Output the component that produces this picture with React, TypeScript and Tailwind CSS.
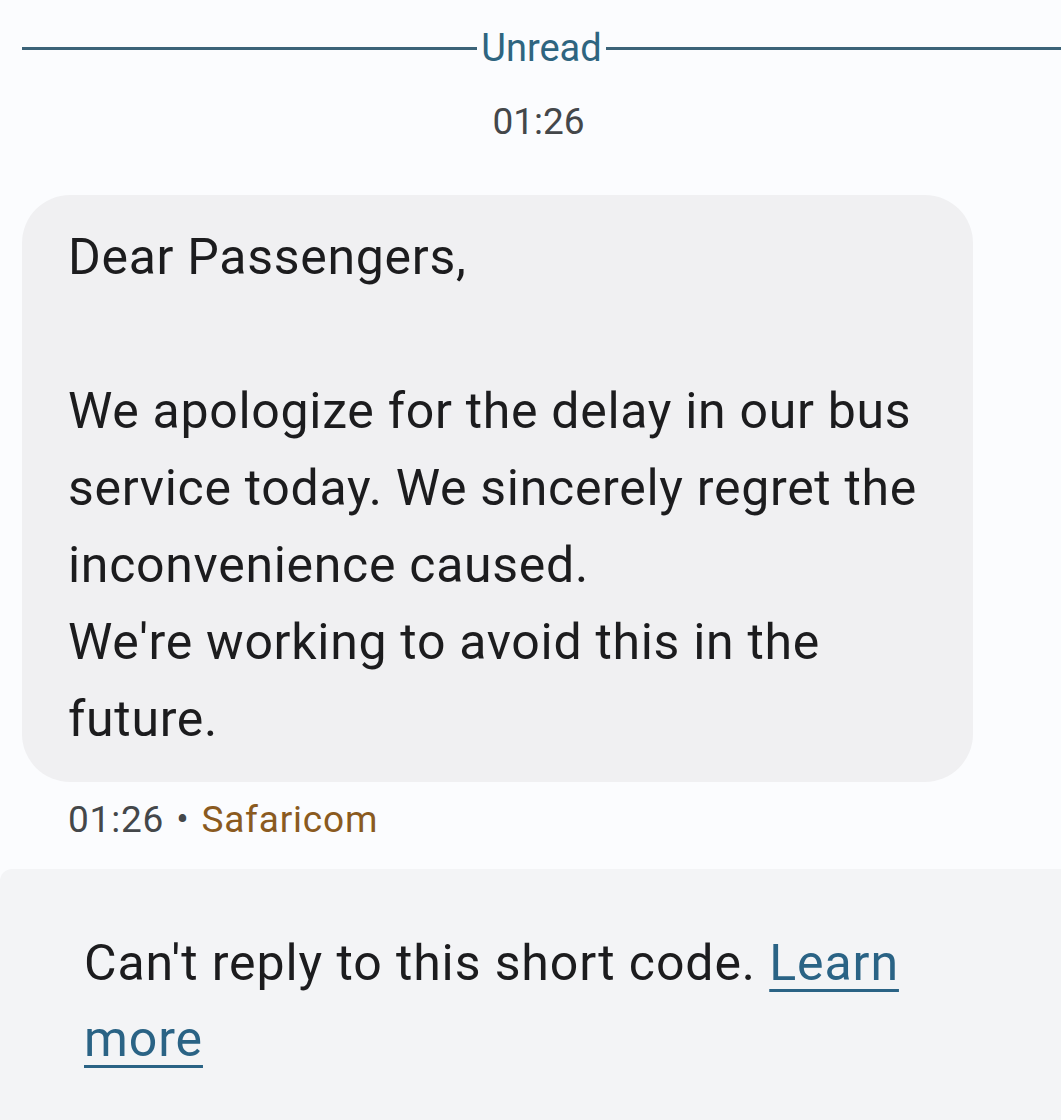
import React from 'react';

const font = { fontFamily: 'Roboto, "Noto Sans", sans-serif' };

export default function App() {
  return (
    <div className="w-[1061px] h-[1120px] bg-[#fbfcfe] flex flex-col overflow-hidden" style={font}>
      <div className="flex items-center pl-[22px] pt-[26px]">
        <div className="flex-1 h-[3px] bg-[#3b6378]" />
        <span className="px-[4px] text-[38px] leading-[44px] text-[#2e6580]">Unread</span>
        <div className="flex-1 h-[3px] bg-[#3b6378]" />
      </div>

      <div className="text-center text-[37px] leading-[44px] text-[#44474a] mt-[30px] pl-[16px]">01:26</div>

      <div className="mt-[51px] ml-[22px] w-[951px] rounded-[48px] bg-[#f0f0f2] pl-[46px] pr-[36px] py-[24px]">
        <p className="text-[50px] leading-[77px] tracking-[0.7px] text-[#1c1c1e] whitespace-pre-line">
          {"Dear Passengers,\n\nWe apologize for the delay in our bus service today. We sincerely regret the inconvenience caused.\nWe're working to avoid this in the future."}
        </p>
      </div>

      <div className="ml-[68px] mt-[16px] text-[37px] leading-[44px] tracking-[0.8px] text-[#44474a]">
        01:26 <span className="mx-[2px]">•</span> <span className="text-[#8a5a20]">Safaricom</span>
      </div>

      <div className="flex-1 mt-[27px] bg-[#f3f4f6] rounded-tl-[12px] pl-[84px] pr-[130px] pt-[56px]">
        <p className="text-[50px] leading-[76px] tracking-[0.9px] text-[#1c1c1e]">
          Can't reply to this short code.{' '}
          <a className="text-[#2a6385] underline decoration-[3px] underline-offset-[9px]">Learn more</a>
        </p>
      </div>
    </div>
  );
}
